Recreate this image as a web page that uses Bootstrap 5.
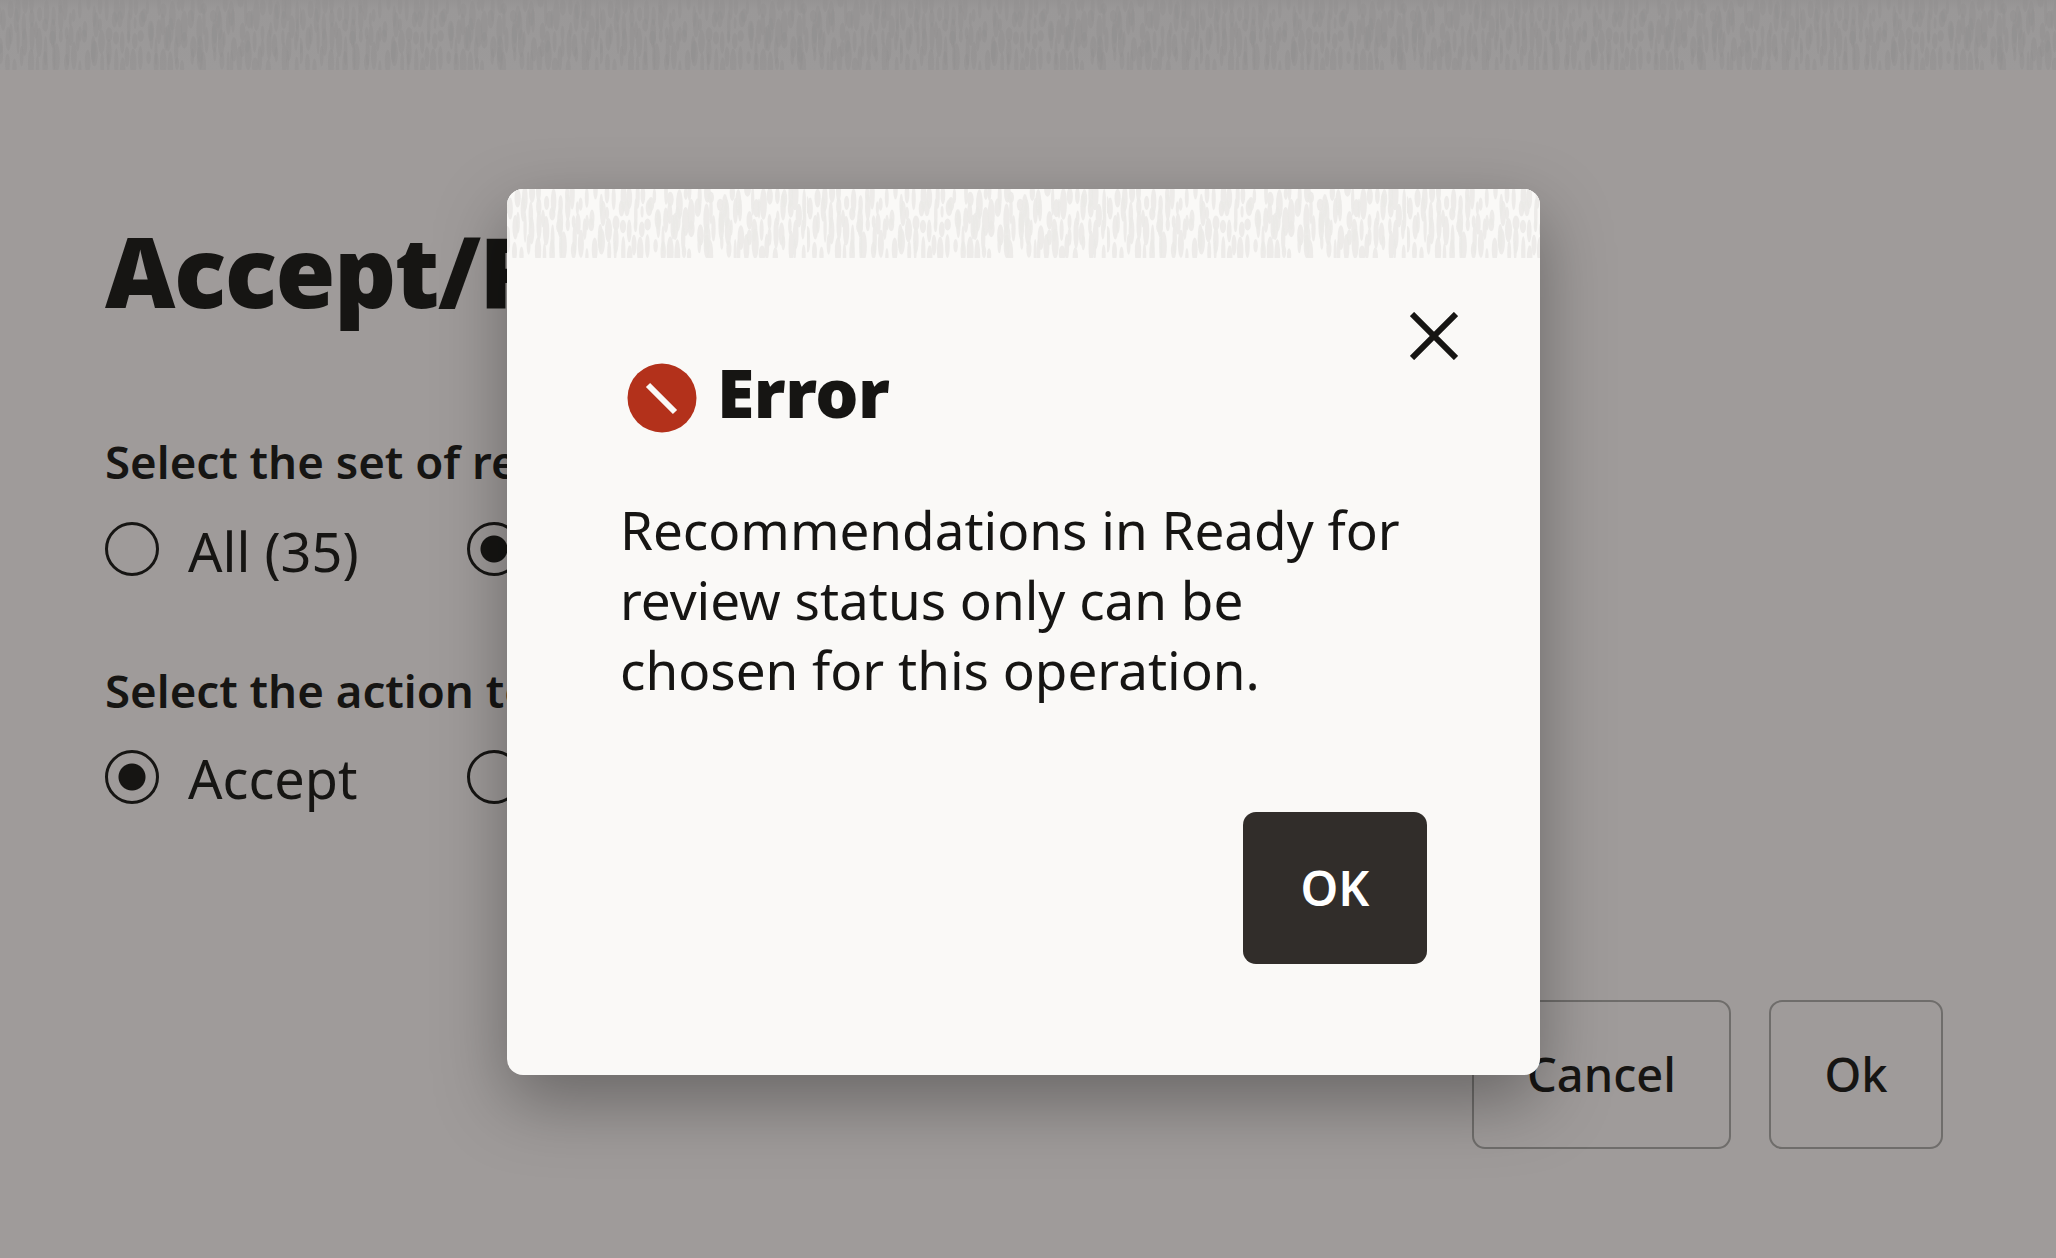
<!doctype html>
<html lang="en">
<head>
<meta charset="utf-8">
<title>Error</title>
<link href="https://cdn.jsdelivr.net/npm/bootstrap@5.3.0/dist/css/bootstrap.min.css" rel="stylesheet">
<style>
html,body{height:100%;}
body{background:#9f9b9a;color:#161513;font-family:"Noto Sans","Open Sans",sans-serif;overflow:hidden;}
.texbar{display:block;width:100%;}
.topstrip{height:70px;background:linear-gradient(#959393 0,#9a9898 10px,#9c9a9a 100%);}
.modalstrip{height:69px;background:#faf9f7;}
.page-wrap{padding:140px 113px 0 105px;}
.page-title{font-size:97px;line-height:120px;font-weight:900;margin:0 0 101px;letter-spacing:-1.5px;white-space:nowrap;}
.group-label{font-size:45.6px;line-height:60px;font-weight:600;margin:0;white-space:nowrap;}
.radio-item{display:flex;align-items:center;margin:0;padding:0;min-height:62px;}
.radio-item .form-check-label{font-size:54px;line-height:62px;margin-left:29px;white-space:nowrap;}
.radio-slot{width:362px;flex:none;}
.form-check-input.radio-mark{float:none;margin:-5px 0 0 0;width:54px;height:54px;flex:none;border:3.5px solid #161513;background-color:transparent;background-image:none;}
.form-check-input.radio-mark:checked{background-color:transparent;border-color:#161513;background-image:radial-gradient(circle,#161513 0,#161513 13px,transparent 14px);}
.row-one{margin-top:29px;margin-bottom:78px;}
.row-two{margin-top:27px;margin-bottom:191px;}
.row-two .form-check-input.radio-mark{margin-top:-2px;}
.btn-row{gap:38px;}
.action-btn{height:149px;font-size:47px;font-weight:500;color:#161513;background:transparent;border:2px solid #6f6d6b;border-radius:13px;display:flex;align-items:center;justify-content:center;padding:0;}
.btn-cancel{width:259px;}
.btn-ok{width:174px;}
.err-dialog{position:absolute;left:507px;top:189px;width:1033px;height:886px;background:#faf9f7;border:0;border-radius:16px;color:#161513;box-shadow:0 26px 70px rgba(0,0,0,.34);}
.err-clip{border-radius:16px;overflow:hidden;height:100%;position:relative;}
.err-inner{padding:93px 113px 0 113px;}
.err-head{padding-left:7px;gap:20px;}
.err-title{font-size:68px;line-height:82px;font-weight:900;margin:0;letter-spacing:-.5px;}
.err-icon{width:70px;height:70px;flex:none;margin-top:12px;}
.err-close{position:absolute;right:82px;top:123px;background:none;border:0;padding:0;width:48px;height:48px;line-height:0;}
.err-body{font-size:53px;line-height:70px;margin:62px 0 0;width:800px;}
.err-foot{position:absolute;right:113px;bottom:111px;}
.err-ok{width:184px;height:152px;background:#312d2a;color:#fff;border:0;border-radius:13px;font-size:48px;font-weight:600;padding:0;}
</style>
</head>
<body>
<svg class="texbar topstrip" id="tex1" height="70" aria-hidden="true"></svg>
<main class="page-wrap">
  <h1 class="page-title">Accept/Reject</h1>
  <p class="group-label">Select the set of records</p>
  <div class="d-flex row-one">
    <div class="radio-slot"><div class="form-check radio-item"><input class="form-check-input radio-mark" type="radio" name="a" id="a1"><label class="form-check-label" for="a1">All (35)</label></div></div>
    <div class="radio-slot"><div class="form-check radio-item"><input class="form-check-input radio-mark" type="radio" name="a" id="a2" aria-label="Selected" checked></div></div>
  </div>
  <p class="group-label">Select the action to</p>
  <div class="d-flex row-two">
    <div class="radio-slot"><div class="form-check radio-item"><input class="form-check-input radio-mark" type="radio" name="b" id="b1" checked><label class="form-check-label" for="b1">Accept</label></div></div>
    <div class="radio-slot"><div class="form-check radio-item"><input class="form-check-input radio-mark" type="radio" name="b" id="b2" aria-label="Reject"></div></div>
  </div>
  <div class="d-flex justify-content-end btn-row">
    <button class="btn action-btn btn-cancel" type="button">Cancel</button>
    <button class="btn action-btn btn-ok" type="button">Ok</button>
  </div>
</main>
<section class="err-dialog" role="dialog" aria-labelledby="errT">
  <div class="err-clip">
  <svg class="texbar modalstrip" id="tex2" height="69" aria-hidden="true"></svg>
  <button class="err-close" type="button" aria-label="Close">
    <svg viewBox="0 0 48 48" width="48" height="48"><path d="M2 2 46 46M46 2 2 46" stroke="#161513" stroke-width="6" fill="none"/></svg>
  </button>
  <div class="err-inner">
    <div class="d-flex align-items-center err-head">
      <svg class="err-icon" viewBox="0 0 70 70" aria-hidden="true"><circle cx="35" cy="35" r="34.5" fill="#b3311b"/><path d="M21 22 48 49" stroke="#faf9f7" stroke-width="6"/></svg>
      <h2 class="err-title" id="errT">Error</h2>
    </div>
    <p class="err-body">Recommendations in Ready for review status only can be chosen for this operation.</p>
  </div>
  <div class="err-foot"><button class="btn err-ok" type="button">OK</button></div>
  </div>
</section>
<script>
(function(){
  function fill(id,color,op,h){
    var s=document.getElementById(id),seed=7,out='';
    function r(){seed=(seed*16807)%2147483647;return seed/2147483647;}
    var pid=id+'p',tw=300;
    for(var row=0;row<4;row++){
      for(var x=0;x<tw;x+=7){
        var cx=x+r()*5,cy=row*(h/4)+r()*h/4,ry=6+r()*10,rx=1.6+r()*2;
        out+='<ellipse cx="'+cx.toFixed(1)+'" cy="'+cy.toFixed(1)+'" rx="'+rx.toFixed(1)+'" ry="'+ry.toFixed(1)+'" fill="'+color+'" opacity="'+op+'"/>';
      }
    }
    s.innerHTML='<defs><pattern id="'+pid+'" width="'+tw+'" height="'+h+'" patternUnits="userSpaceOnUse">'+out+'</pattern></defs><rect width="100%" height="100%" fill="url(#'+pid+')"/>';
  }
  fill('tex1','#918f8f',.5,70);
  fill('tex2','#ebeae8',.9,69);
})();
</script>
<script src="https://cdn.jsdelivr.net/npm/bootstrap@5.3.0/dist/js/bootstrap.bundle.min.js"></script>
</body>
</html>
